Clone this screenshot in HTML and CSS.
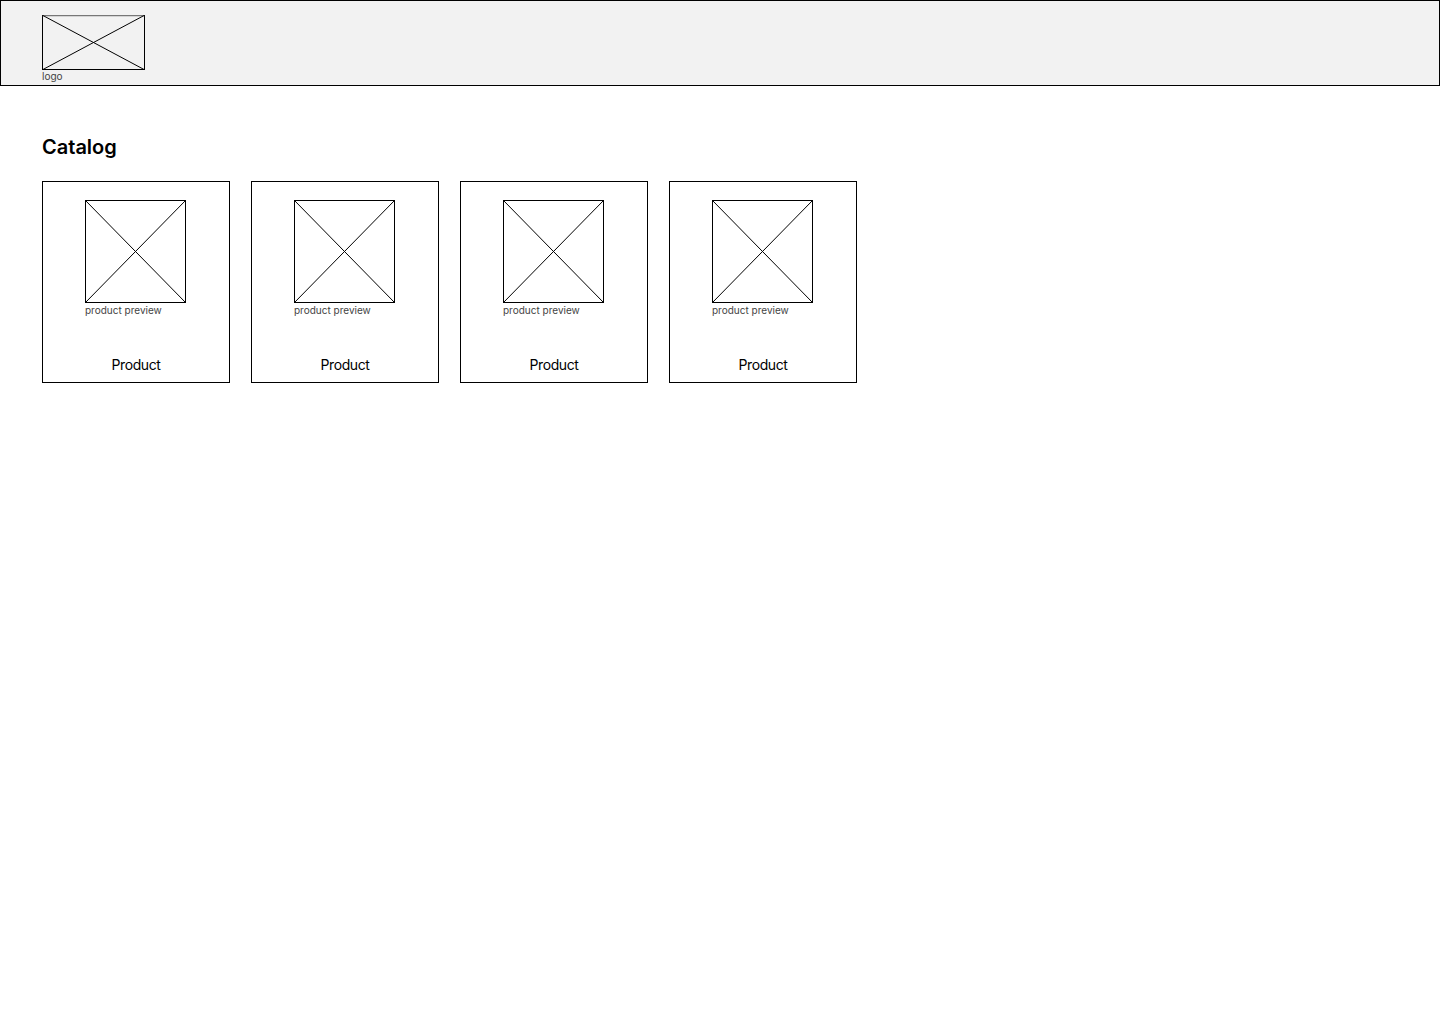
FILE: index.html
```html
<!DOCTYPE html>
<html>
<head>
<meta charset="utf-8">
<link rel="stylesheet" href="styles.css">
</head>
<body>
<header class="header">
  <div class="logo">
    <svg class="ph" viewBox="0 0 103 55" preserveAspectRatio="none" width="103" height="55">
      <rect x="0.5" y="0.5" width="102" height="54" fill="none" stroke="#000" stroke-width="1"/>
      <line x1="0.5" y1="0.5" x2="102.5" y2="0.5" stroke="#777" stroke-width="1.5"/>
      <line x1="0" y1="0" x2="103" y2="55" stroke="#000" stroke-width="1"/>
      <line x1="103" y1="0" x2="0" y2="55" stroke="#000" stroke-width="1"/>
    </svg>
    <span class="cap">logo</span>
  </div>
</header>
<main class="main">
  <h1 class="title">Catalog</h1>
  <div class="grid">
    <div class="card">
      <div class="preview">
        <svg class="ph" viewBox="0 0 101 103" width="101" height="103">
          <rect x="0.5" y="0.5" width="100" height="102" fill="none" stroke="#000"/>
          <line x1="0" y1="0" x2="101" y2="103" stroke="#000"/>
          <line x1="101" y1="0" x2="0" y2="103" stroke="#000"/>
        </svg>
        <span class="cap">product preview</span>
      </div>
      <div class="name">Product</div>
    </div>
    <div class="card">
      <div class="preview">
        <svg class="ph" viewBox="0 0 101 103" width="101" height="103">
          <rect x="0.5" y="0.5" width="100" height="102" fill="none" stroke="#000"/>
          <line x1="0" y1="0" x2="101" y2="103" stroke="#000"/>
          <line x1="101" y1="0" x2="0" y2="103" stroke="#000"/>
        </svg>
        <span class="cap">product preview</span>
      </div>
      <div class="name">Product</div>
    </div>
    <div class="card">
      <div class="preview">
        <svg class="ph" viewBox="0 0 101 103" width="101" height="103">
          <rect x="0.5" y="0.5" width="100" height="102" fill="none" stroke="#000"/>
          <line x1="0" y1="0" x2="101" y2="103" stroke="#000"/>
          <line x1="101" y1="0" x2="0" y2="103" stroke="#000"/>
        </svg>
        <span class="cap">product preview</span>
      </div>
      <div class="name">Product</div>
    </div>
    <div class="card">
      <div class="preview">
        <svg class="ph" viewBox="0 0 101 103" width="101" height="103">
          <rect x="0.5" y="0.5" width="100" height="102" fill="none" stroke="#000"/>
          <line x1="0" y1="0" x2="101" y2="103" stroke="#000"/>
          <line x1="101" y1="0" x2="0" y2="103" stroke="#000"/>
        </svg>
        <span class="cap">product preview</span>
      </div>
      <div class="name">Product</div>
    </div>
  </div>
</main>
</body>
</html>
```

FILE: styles.css
```css
* { box-sizing: border-box; }
html, body { margin: 0; padding: 0; background: #fff; }
body { font-family: Inter, "Liberation Sans", sans-serif; color: #000; }

.header {
  height: 86px;
  background: #f2f2f2;
  border: 1px solid #000;
  padding: 14px 0 0 41px;
}
.logo { display: flex; flex-direction: column; align-items: flex-start; }
.ph { display: block; }
.cap {
  font-size: 10px;
  line-height: 12px;
  color: #444;
  margin-top: 0;
}

.main { padding: 49px 42px 0 42px; }
.title {
  margin: 0;
  font-size: 20px;
  font-weight: 600;
  line-height: 24px;
}
.grid {
  display: flex;
  gap: 21px;
  margin-top: 22px;
}
.card {
  width: 188px;
  height: 202px;
  border: 1px solid #000;
  display: flex;
  flex-direction: column;
  align-items: center;
  padding: 18px 1px 0 0;
}
.preview { display: flex; flex-direction: column; align-items: flex-start; }
.preview .cap { margin-top: 1px; }
.name {
  margin-top: auto;
  margin-bottom: 8px;
  font-size: 14px;
  line-height: 18px;
  letter-spacing: -0.4px;
  padding-left: 1px;
}
```
